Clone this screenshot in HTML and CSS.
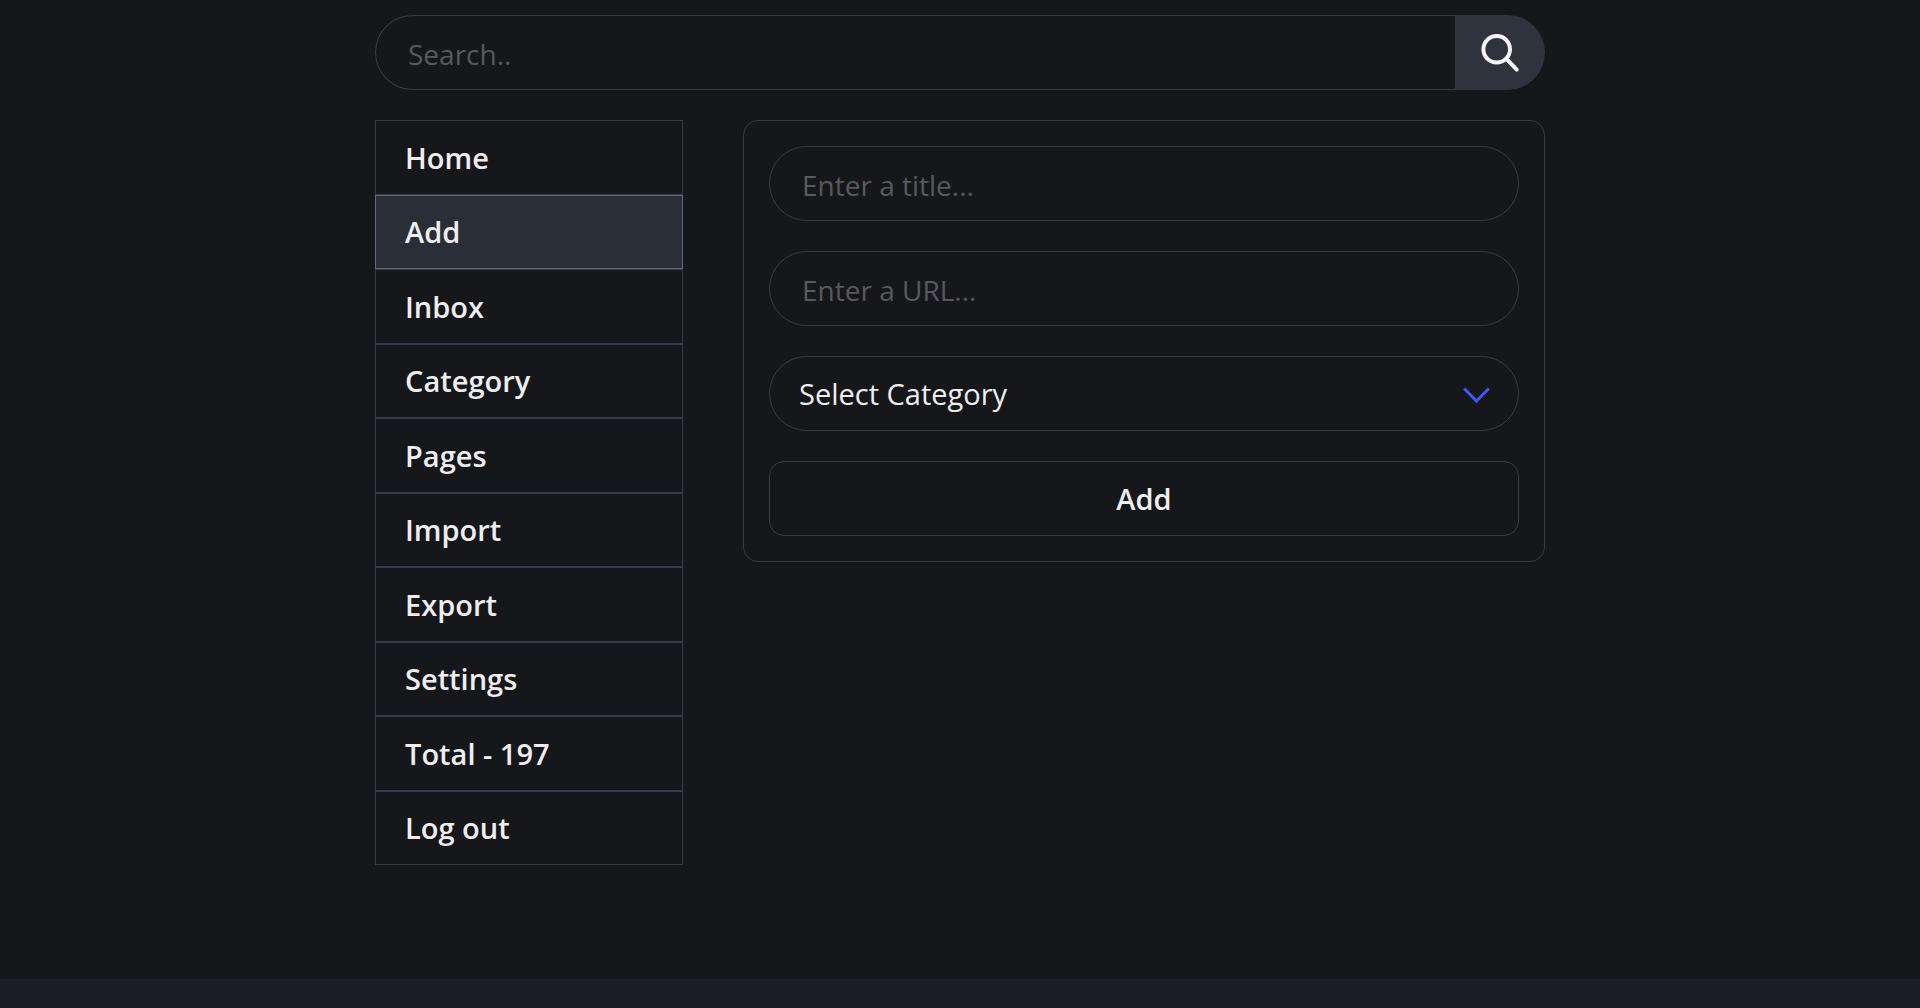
FILE: index.html
```
<!DOCTYPE html>
<html lang="en">
<head>
  <meta charset="utf-8">
  <title>Add</title>
  <link rel="stylesheet" href="styles.css">
</head>
<body>

<div class="container">
  <form class="search" role="search">
    <input class="search-input" type="text" name="q" placeholder="Search.." aria-label="Search">
    <button class="search-btn" type="submit" aria-label="Search">
      <svg viewBox="0 0 40 40" width="40" height="40">
        <circle cx="16.7" cy="16.2" r="13.3"/>
        <path d="M26.3 25.7 L36.7 36.6"/>
      </svg>
    </button>
  </form>

  <div class="main">
    <nav class="menu">
      <a href="#">Home</a>
      <a href="#" class="active">Add</a>
      <a href="#">Inbox</a>
      <a href="#">Category</a>
      <a href="#">Pages</a>
      <a href="#">Import</a>
      <a href="#">Export</a>
      <a href="#">Settings</a>
      <a href="#">Total - 197</a>
      <a href="#">Log out</a>
    </nav>

    <form class="card">
      <input class="field" type="text" name="title" placeholder="Enter a title..." aria-label="Title">
      <input class="field" type="text" name="url" placeholder="Enter a URL..." aria-label="URL">
      <div class="select-wrap">
        <select class="field select" name="category" aria-label="Category">
          <option>Select Category</option>
        </select>
        <svg class="chevron" viewBox="0 0 28 16" width="28" height="16">
          <path d="M1.2 1.5 L13.5 14 L25.8 1.5"/>
        </svg>
      </div>
      <button class="btn" type="submit">Add</button>
    </form>
  </div>
</div>

<footer class="footer"></footer>

</body>
</html>
```
FILE: styles.css
```
* {
    box-sizing: border-box;
}

body {
    margin: 0;
    min-height: 100vh;
    display: flex;
    flex-direction: column;
    background: #16171a;
    color: #eeeef0;
    font-family: "Segoe UI", "Open Sans", "Noto Sans", sans-serif;
    font-size: 29px;
}

input, select, button {
    margin: 0;
    font: inherit;
    color: inherit;
    outline: none;
}

input {
    font-size: 28px;
}

::placeholder {
    color: #58595c;
    opacity: 1;
}

.container {
    width: 100%;
    max-width: 1200px;
    margin: 0 auto;
    padding: 15px;
    flex: 1;
}

/* search */
.search {
    display: flex;
    margin-bottom: 30px;
}
.search-input {
    flex: 1;
    min-width: 0;
    height: 75px;
    padding: 2px 32px 0;
    background: transparent;
    border: 1px solid #383a47;
    border-right: 0;
    border-radius: 38px 0 0 38px;
}
.search-btn {
    width: 90px;
    padding: 0;
    display: flex;
    align-items: center;
    justify-content: center;
    background: #2f333d;
    border: 0;
    border-radius: 0 38px 38px 0;
    cursor: pointer;
}
.search-btn svg {
    fill: none;
    stroke: #f5f5f7;
    stroke-width: 4;
    stroke-linecap: round;
}

.main {
    display: flex;
    align-items: flex-start;
    gap: 60px;
}

/* menu */
.menu {
    flex: 0 0 308px;
    min-height: 745px;
    display: flex;
    flex-direction: column;
}
.menu a {
    flex: 1;
    display: flex;
    align-items: center;
    padding: 0 29px;
    border: 1px solid #383a47;
    color: inherit;
    font-weight: 600;
    text-decoration: none;
}
.menu .active {
    background: #2a2e36;
    border-color: #616981;
}

/* form */
.card {
    flex: 1;
    min-width: 0;
    display: flex;
    flex-direction: column;
    gap: 30px;
    padding: 25px;
    border: 1px solid #383a47;
    border-radius: 15px;
}
.field {
    width: 100%;
    height: 75px;
    padding: 2px 32px 0;
    background: transparent;
    border: 1px solid #383a47;
    border-radius: 38px;
}
.select-wrap {
    position: relative;
    display: flex;
}
.select {
    padding: 0 29px;
    appearance: none;
}
.select option {
    background: #16171a;
}
.chevron {
    position: absolute;
    top: 31px;
    right: 28px;
    fill: none;
    stroke: #4257f5;
    stroke-width: 3;
    pointer-events: none;
}
.btn {
    height: 75px;
    padding: 0;
    background: transparent;
    border: 1px solid #383a47;
    border-radius: 15px;
    font-weight: 600;
    cursor: pointer;
}

.footer {
    height: 29px;
    background: #1a1d21;
}
```
